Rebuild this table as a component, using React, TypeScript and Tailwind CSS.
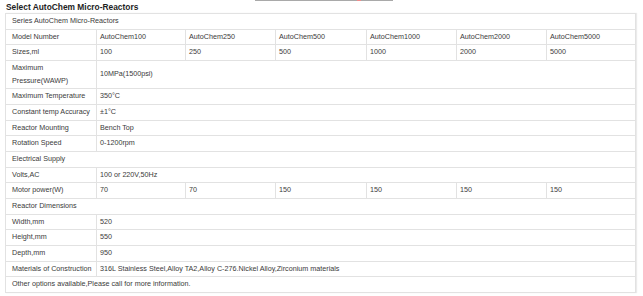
import React from "react";

const cell =
  "border border-[#e2e2e2] py-[1px] align-middle leading-[12.67px] whitespace-nowrap";
const first = `${cell} pl-[6px]`;
const other = `${cell} pl-[3px]`;

type Row = { label: React.ReactNode; values?: string[]; span?: boolean; full?: boolean };

const rows: Row[] = [
  { label: "Series AutoChem Micro-Reactors", full: true },
  {
    label: "Model Number",
    values: ["AutoChem100", "AutoChem250", "AutoChem500", "AutoChem1000", "AutoChem2000", "AutoChem5000"],
  },
  { label: "Sizes,ml", values: ["100", "250", "500", "1000", "2000", "5000"] },
  {
    label: (
      <>
        Maximum
        <br />
        Pressure(WAWP)
      </>
    ),
    values: ["10MPa(1500psi)"],
    span: true,
  },
  { label: "Maximum Temperature", values: ["350°C"], span: true },
  { label: "Constant temp Accuracy", values: ["±1°C"], span: true },
  { label: "Reactor Mounting", values: ["Bench Top"], span: true },
  { label: "Rotation Speed", values: ["0-1200rpm"], span: true },
  { label: "Electrical Supply", full: true },
  { label: "Volts,AC", values: ["100 or 220V,50Hz"], span: true },
  { label: "Motor power(W)", values: ["70", "70", "150", "150", "150", "150"] },
  { label: "Reactor Dimensions", full: true },
  { label: "Width,mm", values: ["520"], span: true },
  { label: "Height,mm", values: ["550"], span: true },
  { label: "Depth,mm", values: ["950"], span: true },
  {
    label: "Materials of Construction",
    values: ["316L Stainless Steel,Alloy TA2,Alloy C-276.Nickel Alloy,Zirconium materials"],
    span: true,
  },
  { label: "Other options available,Please call for more information.", full: true },
];

export default function App() {
  return (
    <div
      className="w-[643px] h-[296px] bg-white overflow-hidden text-[#3a3a3a]"
      style={{ fontFamily: '"Liberation Sans", Arial, sans-serif' }}
    >
      <div className="h-[1px] flex">
        <div className="ml-[255px] w-[138px] h-[1px] bg-[#a9a9a9] flex">
          <div className="ml-[102px] w-[4px] h-[1px] bg-[#f08a8a]" />
        </div>
      </div>
      <div className="h-[12px] pl-[6px] text-[8.4px] leading-[12px] font-bold text-[#1e1e1e]">
        Select AutoChem Micro-Reactors
      </div>
      <div className="ml-[5px] w-[631px] shadow-[1px_0_1px_rgba(0,0,0,0.08)]">
        <table className="w-[630px] table-fixed border-collapse text-[7.2px]">
          <colgroup>
            <col className="w-[91px]" />
            <col className="w-[89px]" />
            <col className="w-[90px]" />
            <col className="w-[91px]" />
            <col className="w-[90px]" />
            <col className="w-[90px]" />
            <col className="w-[89px]" />
          </colgroup>
          <tbody>
            {rows.map((r, i) => (
              <tr key={i}>
                {r.full ? (
                  <td colSpan={7} className={first}>
                    {r.label}
                  </td>
                ) : (
                  <>
                    <td className={first}>{r.label}</td>
                    {r.span ? (
                      <td colSpan={6} className={other}>
                        {r.values![0]}
                      </td>
                    ) : (
                      r.values!.map((v, j) => (
                        <td key={j} className={other}>
                          {v}
                        </td>
                      ))
                    )}
                  </>
                )}
              </tr>
            ))}
          </tbody>
        </table>
      </div>
    </div>
  );
}
